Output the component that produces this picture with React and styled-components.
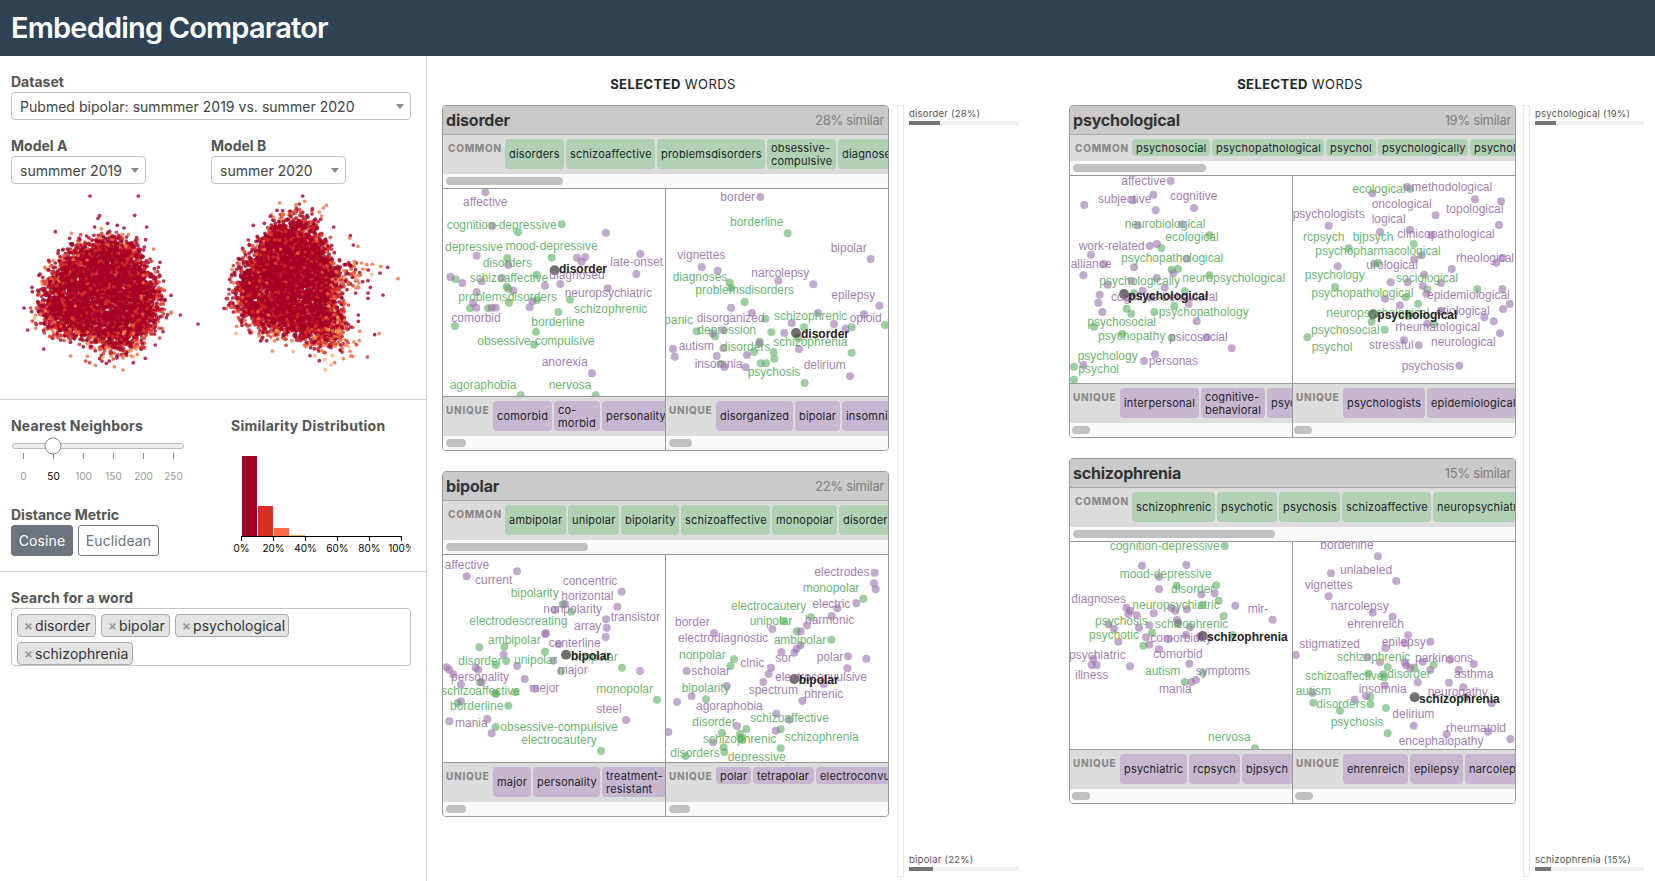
import React, { useMemo } from "react";
import styled, { createGlobalStyle } from "styled-components";

const GlobalStyle = createGlobalStyle`
  *, *::before, *::after { box-sizing: border-box; }
  body {
    margin: 0;
    background: #fff;
    color: #212529;
    font-family: Inter, "Liberation Sans", sans-serif;
    overflow: hidden;
  }
`;

const Page = styled.div`
  display: flex;
  flex-direction: column;
  width: 1655px;
  height: 881px;
  overflow: hidden;
`;

const Header = styled.header`
  flex: none;
  display: flex;
  align-items: center;
  height: 56px;
  padding: 0 11px 1px;
  background: #2f4355;
  color: #fff;
`;

const Title = styled.h1`
  margin: 0;
  font-size: 29px;
  font-weight: 600;
  letter-spacing: -0.82px;
  line-height: 36px;
  white-space: nowrap;
`;

const Body = styled.div`
  flex: 1;
  display: flex;
  min-height: 0;
`;

/* ---------- sidebar ---------- */

const Sidebar = styled.aside`
  flex: none;
  width: 427px;
  border-right: 1px solid #ccc;
`;

const Section = styled.section`
  height: ${(p) => p.$height}px;
  padding: ${(p) => p.$top}px 15px 0 11px;
  border-bottom: ${(p) => (p.$last ? "none" : "1px solid #d0d0d0")};
  overflow: hidden;
`;

const Columns = styled.div`
  display: flex;
`;

const Column = styled.div`
  flex: none;
  width: ${(p) => p.$width}px;
`;

const FieldLabel = styled.div`
  height: 20px;
  font-size: 14px;
  font-weight: 700;
  line-height: 20px;
  letter-spacing: ${(p) => p.$spacing || 0}px;
  color: #555;
  white-space: nowrap;
`;

const ModelLabel = styled(FieldLabel)`
  margin-top: 16px;
`;

const MetricLabel = styled(FieldLabel)`
  margin-top: 15px;
`;

const Select = styled.div`
  display: flex;
  align-items: center;
  justify-content: space-between;
  width: ${(p) => p.$width}px;
  height: 28px;
  padding: 0 6px 0 8px;
  border: 1px solid #c4c4c4;
  border-radius: 4px;
  font-size: 14px;
  letter-spacing: 0.03px;
  color: #444;
  white-space: nowrap;
`;

const Caret = styled.span`
  border: 4px solid transparent;
  border-top: 5px solid #888;
  border-bottom: 0;
`;

const CloudArea = styled.svg`
  display: block;
  width: 415px;
  height: 200px;
  margin: 5px 0 0 -11px;
`;

const SliderArea = styled.svg`
  display: block;
  width: 190px;
  height: 54px;
  margin-left: -11px;
`;

const Histogram = styled.svg`
  display: block;
  width: 180px;
  height: 120px;
`;

const ButtonRow = styled.div`
  display: flex;
  gap: 5px;
`;

const MetricButton = styled.button`
  width: ${(p) => p.$width}px;
  height: 31px;
  padding: 0;
  border: 1px solid #6c757d;
  border-radius: 3px;
  background: ${(p) => (p.$active ? "#6c757d" : "#fff")};
  color: ${(p) => (p.$active ? "#fff" : "#6c757d")};
  font: 14px Inter, sans-serif;
  letter-spacing: 0.1px;
  text-align: center;
`;

const TagBox = styled.div`
  display: flex;
  flex-wrap: wrap;
  align-content: flex-start;
  gap: 5px;
  width: 400px;
  height: 58px;
  padding: 5px 100px 0 5px;
  border: 1px solid #c4c4c4;
  border-radius: 4px;
`;

const Tag = styled.span`
  display: flex;
  align-items: center;
  gap: 2px;
  width: ${(p) => p.$width}px;
  height: 23px;
  padding-left: 6px;
  border: 1px solid #aaa;
  border-radius: 4px;
  background: #e4e4e4;
  color: #333;
  font-size: 14px;
  letter-spacing: 0.06px;
  white-space: nowrap;
`;

const TagRemove = styled.b`
  width: 9px;
  color: #999;
  font-size: 13px;
  text-align: center;
`;

/* ---------- main area ---------- */

const Main = styled.main`
  flex: 1;
  display: flex;
  min-width: 0;
  padding-left: 15px;
`;

const Panel = styled.section`
  flex: none;
  width: 627px;
  height: 825px;
`;

const PanelTitle = styled.h2`
  width: 462px;
  height: 49px;
  margin: 0;
  padding-top: 18px;
  font-size: 13px;
  font-weight: 400;
  line-height: 21px;
  letter-spacing: 0.42px;
  text-align: center;
  color: #212529;
`;

const PanelBody = styled.div`
  display: flex;
  height: 772px;
`;

const CardList = styled.div`
  flex: none;
  display: flex;
  flex-direction: column;
  gap: 20px;
  width: 447px;
`;

const Rail = styled.div`
  flex: none;
  width: 7px;
  margin-left: ${(p) => p.$gap}px;
  border: 1px solid #e9e9e9;
`;

const Overview = styled.div`
  flex: 1;
  display: flex;
  flex-direction: column;
  justify-content: space-between;
  padding: 1px 0 6px ${(p) => p.$gap}px;
`;

const OverviewItem = styled.div`
  width: 109px;
`;

const OverviewLabel = styled.div`
  height: 15px;
  font-size: 9.5px;
  line-height: 15px;
  letter-spacing: 0.24px;
  color: #555;
  white-space: nowrap;
`;

const OverviewTrack = styled.div`
  height: 4px;
  background: #f0f0f0;
`;

const OverviewFill = styled.div`
  height: 4px;
  background: #757575;
`;

const Card = styled.article`
  flex: none;
  border: 1px solid #999;
  border-radius: 4px;
  overflow: hidden;
`;

const CardHeader = styled.div`
  display: flex;
  align-items: center;
  justify-content: space-between;
  height: 29px;
  padding: 0 4px 0 3px;
  border-bottom: 1px solid #aaa;
  background: #cacaca;
`;

const CardWord = styled.h3`
  margin: 0;
  font-size: 16px;
  font-weight: 700;
  letter-spacing: -0.2px;
  color: #333;
`;

const CardScore = styled.span`
  font-size: 13px;
  letter-spacing: -0.3px;
  color: #808080;
`;

const WordStrip = styled.div`
  display: flex;
  align-items: flex-start;
  height: ${(p) => (p.$single ? 26 : 39)}px;
  padding-top: 4px;
  background: #dcdcdc;
  overflow: hidden;
`;

const StripLabel = styled.div`
  flex: none;
  width: ${(p) => p.$width}px;
  padding-left: ${(p) => p.$inset}px;
  font-size: 10px;
  font-weight: 800;
  line-height: 19px;
  letter-spacing: 0.75px;
  color: #8a8a8a;
`;

const ChipRow = styled.div`
  display: flex;
  gap: 2px;
`;

const Chip = styled.div`
  flex: none;
  display: flex;
  align-items: center;
  width: ${(p) => p.$width}px;
  height: ${(p) => (p.$single ? 17 : 30)}px;
  padding: 1px 0 0 4px;
  border-radius: 4px;
  background: ${(p) => (p.$tone === "common" ? "#b0d1b4" : "#c6b6cf")};
  color: #212529;
  font-size: 11px;
  line-height: 13px;
  letter-spacing: 0.2px;
  white-space: pre;
`;

const ScrollTrack = styled.div`
  height: 14px;
  padding: 3px 0 0 ${(p) => p.$inset}px;
  background: #fafafa;
`;

const ScrollThumb = styled.div`
  width: ${(p) => p.$width}px;
  height: 8px;
  border-radius: 4px;
  background: #c1c1c1;
`;

const Halves = styled.div`
  display: flex;
`;

const Half = styled.div`
  flex: none;
  width: ${(p) => (p.$first ? 223 : 222)}px;
  border-right: ${(p) => (p.$first ? "1px solid #999" : "none")};
`;

const Plot = styled.svg`
  display: block;
  width: 222px;
  height: 209px;
  border-top: 1px solid #999;
  border-bottom: 1px solid #999;
  font-family: "Liberation Sans", sans-serif;
  font-size: 36px;
`;

/* ---------- data ---------- */

const P = "#9970ab";
const G = "#5aae61";

const cards = {
  disorder: {
    word: "disorder", score: 28, thumb: 117, inset: 3,
    common: [["disorders", 59], ["schizoaffective", 89], ["problemsdisorders", 108], ["obsessive-\ncompulsive", 69], ["diagnoses", 70]],
    halves: [
      {
        thumb: 20, inset: 3,
        unique: [["comorbid", 59], ["co-\nmorbid", 46], ["personality", 67]],
        origin: [24, 357],
        focus: [359, 601, 373, 597],
        p: [[151,367],[172,468],[513,488],[125,557],[220,585],[426,563],[451,561],[440,575],[616,552],[604,612],[46,621],[82,639],[140,634],[200,624],[330,647],[376,642],[518,655],[235,662],[125,666],[114,698],[124,713],[170,713],[182,713],[284,712],[292,694],[471,910]],
        g: [[380,463],[249,487],[217,564],[350,563],[305,614],[62,628],[215,650],[220,656],[222,698],[105,715],[159,715],[306,690],[405,689],[370,726],[60,768],[303,785],[297,824],[257,976],[482,976]],
        labels: [[P,"affective",85,396],[G,"cognition-depressive",36,465],[G,"depressive",31,530],[G,"mood-depressive",213,528],[G,"disorders",144,578],[P,"late-onset",527,576],[G,"schizoaffective",105,624],[P,"diagnosed",344,615],[P,"neuropsychiatric",390,668],[G,"problemsdisorders",71,681],[G,"schizophrenic",418,717],[P,"comorbid",50,744],[G,"borderline",290,756],[G,"obsessive-compulsive",128,813],[P,"anorexia",321,876],[G,"agoraphobia",45,945],[G,"nervosa",342,945]],
      },
      {
        thumb: 23, inset: 3,
        unique: [["disorganized", 77], ["bipolar", 45], ["insomnia", 60]],
        origin: [18, 357],
        focus: [408, 789, 424, 792],
        p: [[301,381],[632,567],[125,591],[173,602],[355,632],[460,643],[658,707],[213,713],[275,729],[474,729],[612,733],[395,759],[522,762],[557,776],[373,789],[190,781],[158,790],[39,837],[44,860],[190,834],[298,820],[417,837],[170,858],[261,855],[193,891],[257,892],[570,919]],
        g: [[383,490],[209,638],[214,654],[254,696],[316,746],[675,765],[432,772],[575,772],[110,784],[165,799],[334,787],[299,815],[282,846],[341,846],[343,866],[183,882],[302,880],[318,880],[575,848],[414,805],[434,939]],
        labels: [[P,"border",182,381],[G,"borderline",211,456],[P,"bipolar",513,534],[P,"vignettes",53,555],[P,"narcolepsy",275,609],[G,"diagnoses",39,621],[G,"problemsdisorders",107,660],[P,"epilepsy",515,675],[G,"panic",14,750],[P,"disorganized",111,744],[G,"schizophrenic",343,738],[P,"opioid",570,744],[G,"depression",113,780],[G,"schizophrenia",341,816],[P,"autism",57,828],[G,"disorders",184,831],[P,"insomnia",105,882],[P,"delirium",432,885],[G,"psychosis",264,906]],
      },
    ],
  },
  bipolar: {
    word: "bipolar", score: 22, thumb: 142, inset: 3,
    common: [["ambipolar", 61], ["unipolar", 51], ["bipolarity", 58], ["schizoaffective", 89], ["monopolar", 65], ["disorder", 60]],
    halves: [
      {
        thumb: 20, inset: 3,
        unique: [["major", 38], ["personality", 67], ["treatment-\nresistant", 66]],
        origin: [24, 270],
        focus: [393, 569, 409, 573],
        p: [[95,334],[246,319],[560,380],[547,425],[390,417],[360,435],[513,463],[515,488],[512,516],[330,507],[333,505],[371,538],[206,569],[246,603],[355,587],[35,607],[43,614],[55,628],[122,608],[130,614],[78,659],[140,652],[269,642],[300,671],[615,618],[78,709],[43,769],[157,762],[170,805],[573,765]],
        g: [[383,418],[409,440],[133,547],[208,546],[330,560],[182,600],[214,588],[378,619],[561,608],[181,685],[241,682],[183,686],[220,722],[68,714],[666,704],[182,786],[498,858],[135,651]],
        labels: [[P,"affective",30,300],[P,"current",121,345],[P,"concentric",384,348],[G,"bipolarity",228,384],[P,"horizontal",380,393],[P,"nonpolarity",326,432],[P,"transistor",528,456],[G,"electrodescreating",104,468],[P,"array",418,483],[G,"ambipolar",160,525],[P,"centerline",342,534],[G,"disorder",71,588],[G,"unipolar",238,585],[G,"nonpolar",409,577],[P,"major",369,615],[P,"personality",49,636],[P,"mejor",284,669],[G,"monopolar",485,672],[G,"schizoaffective",20,678],[G,"borderline",46,723],[P,"steel",485,732],[P,"mania",61,774],[G,"obsessive-compulsive",197,786],[G,"electrocautery",260,825]],
      },
      {
        thumb: 21, inset: 3, single: true,
        unique: [["polar", 35], ["tetrapolar", 61], ["electroconvulsive", 110]],
        origin: [18, 270],
        focus: [403, 642, 417, 645],
        p: [[644,323],[642,355],[647,373],[589,415],[532,430],[515,453],[441,481],[337,492],[422,499],[162,504],[421,541],[410,551],[403,563],[364,561],[564,574],[619,581],[333,608],[326,627],[562,610],[80,618],[310,651],[491,657],[200,663],[95,694],[51,711],[427,708],[349,746],[388,764],[231,783],[347,797],[25,801],[159,832]],
        g: [[610,401],[453,457],[370,468],[410,499],[514,524],[222,583],[211,603],[138,703],[259,792],[362,793],[186,804],[240,806],[242,818],[246,825],[191,847],[193,861],[362,850],[77,873]],
        labels: [[P,"electrodes",464,321],[G,"monopolar",429,369],[P,"electric",458,417],[G,"electrocautery",214,423],[G,"unipolar",270,468],[P,"harmonic",436,465],[P,"border",46,471],[P,"electrodiagnostic",55,519],[G,"ambipolar",342,525],[G,"nonpolar",58,570],[P,"clnic",242,594],[P,"sor",347,579],[P,"polar",471,576],[P,"scholar",95,618],[P,"electroconvulsive",346,636],[G,"bipolarity",66,669],[P,"spectrum",267,675],[P,"phrenic",433,687],[P,"agoraphobia",109,723],[G,"schizoaffective",272,759],[G,"disorder",98,771],[G,"schizophrenic",130,822],[G,"schizophrenia",375,816],[G,"disorders",32,864],[G,"depressive",204,876]],
      },
    ],
  },
  psychological: {
    word: "psychological", score: 19, thumb: 133, inset: 3, single: true,
    common: [["psychosocial", 78], ["psychopathological", 112], ["psychol", 50], ["psychologically", 90], ["psychology", 70]],
    halves: [
      {
        thumb: 18, inset: 2,
        unique: [["interpersonal", 79], ["cognitive-\nbehavioral", 64], ["psychiatric", 67]],
        origin: [30, 318],
        focus: [192, 672, 206, 678],
        p: [[332,333],[280,374],[218,391],[73,405],[402,414],[287,421],[233,466],[365,463],[291,522],[269,528],[93,554],[380,566],[132,582],[222,592],[70,616],[340,610],[290,624],[214,632],[143,644],[314,653],[248,662],[119,674],[115,698],[200,684],[274,682],[386,702],[127,726],[410,754],[440,802],[515,835],[285,853],[252,873],[70,885]],
        g: [[448,496],[304,534],[335,599],[354,597],[448,616],[374,664],[222,670],[343,708],[200,716],[214,731],[283,726],[102,770],[186,792],[335,804],[42,890],[42,929]],
        labels: [[P,"affective",185,333],[P,"subjective",115,387],[P,"cognitive",331,378],[G,"neurobiological",195,462],[G,"ecological",317,501],[P,"work-related",57,528],[G,"psychopathological",184,564],[P,"alliance",33,582],[G,"psychologically",119,633],[G,"neuropsychological",368,624],[P,"cognitive-behavioral",154,681],[G,"psychopathology",297,726],[G,"psychosocial",83,756],[G,"psychopathy",115,798],[P,"psicosocial",328,801],[G,"psychology",54,858],[P,"personas",267,873],[G,"psychol",56,897]],
      },
      {
        thumb: 18, inset: 1,
        unique: [["psychologists", 82], ["epidemiological", 92]],
        origin: [24, 318],
        focus: [264, 733, 278, 735],
        p: [[366,351],[262,370],[570,388],[648,394],[452,436],[131,467],[642,465],[375,480],[285,486],[439,495],[410,556],[388,568],[652,563],[634,578],[158,589],[500,597],[417,614],[317,637],[368,637],[468,639],[413,648],[652,657],[424,671],[300,686],[345,706],[674,702],[654,717],[468,722],[598,742],[626,754],[427,761],[645,790],[357,811],[401,826],[523,887]],
        g: [[376,356],[386,522],[191,535],[268,581],[280,579],[150,651],[577,658],[427,658],[362,682],[399,701],[372,734],[260,755],[446,762],[299,779],[67,802]],
        labels: [[G,"ecological",203,357],[P,"methodological",380,351],[P,"oncological",261,402],[P,"topological",484,417],[P,"psychologists",24,433],[P,"logical",261,447],[G,"rcpsych",55,501],[G,"bjpsych",204,501],[P,"clinicopathological",338,492],[G,"psychopharmacological",92,543],[P,"rheological",514,564],[P,"urological",245,585],[G,"psychology",60,615],[G,"sociological",334,624],[G,"psychopathological",80,669],[P,"epidemiological",427,675],[G,"neuropsychological",125,729],[P,"etiological",455,723],[P,"rheumatological",332,771],[G,"psychosocial",79,780],[G,"psychol",81,831],[P,"stressful",253,825],[P,"neurological",439,816],[P,"psychosis",351,888]],
      },
    ],
  },
  schizophrenia: {
    word: "schizophrenia", score: 15, thumb: 202, inset: 3,
    common: [["schizophrenic", 83], ["psychotic", 60], ["psychosis", 61], ["schizoaffective", 89], ["neuropsychiatric", 100]],
    halves: [
      {
        thumb: 18, inset: 2,
        unique: [["psychiatric", 67], ["rcpsych", 51], ["bjpsych", 51]],
        origin: [30, 276],
        focus: [428, 558, 442, 561],
        p: [[246,347],[379,345],[297,380],[297,417],[464,430],[424,433],[526,467],[199,473],[210,482],[205,492],[230,496],[281,490],[334,474],[346,482],[381,478],[638,509],[351,510],[355,519],[145,523],[268,526],[162,536],[237,533],[390,531],[378,555],[258,562],[325,568],[175,575],[268,584],[419,560],[297,598],[100,626],[95,645],[110,645],[210,649],[388,641],[408,690],[394,696]],
        g: [[494,288],[350,407],[468,406],[476,452],[427,465],[491,498],[354,520],[276,548],[518,555],[250,587],[428,668],[374,696],[585,895]],
        labels: [[G,"cognition-depressive",150,288],[G,"mood-depressive",180,372],[G,"disorder",334,417],[P,"diagnoses",35,447],[G,"neuropsychiatric",218,465],[P,"mir-",564,477],[G,"psychosis",106,513],[G,"schizophrenic",286,521],[G,"psychotic",88,555],[P,"comorbidity",272,564],[P,"comorbid",281,612],[P,"psychiatric",28,615],[P,"illness",46,675],[G,"autism",256,663],[P,"symptoms",408,663],[P,"mania",298,717],[G,"nervosa",445,861]],
      },
      {
        thumb: 18, inset: 2,
        unique: [["ehrenreich", 65], ["epilepsy", 53], ["narcolepsy", 68]],
        origin: [24, 276],
        focus: [389, 742, 403, 747],
        p: [[279,319],[138,370],[334,393],[131,439],[263,488],[323,500],[369,556],[436,575],[359,580],[301,594],[32,615],[246,622],[285,637],[359,637],[364,646],[376,654],[413,635],[495,629],[566,642],[436,660],[521,660],[398,697],[492,698],[299,706],[535,712],[243,738],[82,729],[209,749],[542,742],[620,760],[386,827],[485,852],[609,845],[676,867]],
        g: [[446,644],[308,651],[388,653],[250,671],[295,673],[297,682],[85,758],[256,741],[256,763],[303,774],[165,782],[308,850]],
        labels: [[P,"borderline",107,285],[P,"unlabeled",166,360],[P,"vignettes",60,405],[P,"narcolepsy",138,468],[P,"ehrenreich",188,522],[P,"stigmatized",44,582],[P,"epilepsy",291,576],[G,"schizophrenic",157,621],[P,"parkinsons",391,624],[G,"schizoaffective",61,678],[G,"disorder",308,672],[P,"asthma",508,672],[G,"autism",33,723],[P,"insomnia",222,717],[P,"neuropathy",429,726],[G,"disorders",95,762],[P,"delirium",323,792],[G,"psychosis",138,816],[P,"rheumatoid",484,834],[P,"encephalopathy",342,873]],
      },
    ],
  },
};

const panels = [
  { cards: [cards.disorder, cards.bipolar], railGap: 8, overviewGap: 5 },
  { cards: [cards.psychological, cards.schizophrenia], railGap: 7, overviewGap: 5 },
];

/* ---------- embedding clouds ---------- */

const clouds = [
  {
    seed: 7, center: [302, 880], count: 4900,
    fringe: [[330, 1065, 42, 14, 26]],
    outline: [[108,925],[126,840],[178,762],[232,720],[300,700],[362,700],[415,726],[456,786],[482,860],[496,930],[482,985],[440,1030],[380,1060],[310,1055],[225,1030],[150,1010],[112,965]],
    loose: [[270,591],[415,591],[299,650],[294,658],[404,649],[323,673],[352,679],[440,684],[166,698],[372,687],[304,689,2],[214,703,2],[96,865],[72,927],[95,938],[104,958,3],[107,988,2],[83,993],[131,1050],[212,1071,2],[513,889],[541,948],[594,975],[489,998],[466,1038],[436,1078],[400,1091],[369,1113,2],[343,1103,2],[286,1099,2],[309,1076,3],[319,1093],[351,1077],[480,790],[461,750,2],[117,829],[151,802,2],[137,808,2],[514,942,2],[392,1055,3],[412,1066,2]],
  },
  {
    seed: 21, center: [875, 850], count: 4900,
    fringe: [[1052, 825, 24, 26, 60], [1010, 1030, 34, 20, 60], [1015, 950, 16, 45, 60]],
    outline: [[684,905],[702,825],[735,765],[780,705],[828,655],[895,632],[948,658],[980,715],[1000,770],[1030,810],[1030,850],[1028,900],[1036,960],[1030,1020],[985,1050],[940,1050],[885,1022],[815,1026],[755,995],[704,948]],
    loose: [[908,591],[839,612,2],[914,607,2],[888,617,2],[979,619,2],[970,627,2],[937,629],[831,634],[848,635],[958,639,2],[811,652],[760,679],[728,748],[745,723],[696,812,2],[672,928],[708,1003,3],[710,982,2],[1001,684],[1051,710],[1049,717,2],[1060,738],[1074,742,2],[1117,796,2],[1142,802,2],[1163,805],[1140,822],[1194,839,2],[1104,845],[1111,865],[1104,882],[1104,898],[1149,888],[1075,948],[1075,967],[1124,1007],[1138,1003,2],[1076,866,2],[1078,1025,2],[1045,1043,3],[1030,1079,2],[976,1112,3],[994,1098,3],[1004,1091,2],[974,1082,3],[997,1069,3],[880,1057,3],[817,1056,2],[930,1070],[1085,792,2],[1105,813]],
  },
];

const ramp = ["#a50026", "#d73027", "#f46d43", "#fdae61"];

function makeRandom(seed) {
  let s = seed * 7919;
  return () => {
    s = (s * 1664525 + 1013904223) % 4294967296;
    return s / 4294967296;
  };
}

function buildCloud({ seed, center, count, outline, loose, fringe }) {
  const rnd = makeRandom(seed);
  const [cx, cy] = center;
  const reach = (angle) => {
    const dx = Math.cos(angle);
    const dy = Math.sin(angle);
    for (let i = 0; i < outline.length; i++) {
      const [ax, ay] = outline[i];
      const [bx, by] = outline[(i + 1) % outline.length];
      const ex = bx - ax;
      const ey = by - ay;
      const det = dx * ey - dy * ex;
      if (Math.abs(det) < 1e-9) continue;
      const t = ((ax - cx) * ey - (ay - cy) * ex) / det;
      const u = ((ax - cx) * dy - (ay - cy) * dx) / det;
      if (t > 0 && u >= 0 && u <= 1) return t;
    }
    return 200;
  };
  const dots = [];
  while (dots.length < count) {
    const x = cx + (rnd() - 0.5) * 520;
    const y = cy + (rnd() - 0.5) * 560;
    const d = Math.hypot(x - cx, y - cy) / reach(Math.atan2(y - cy, x - cx));
    if (d > 1.12) continue;
    if (d > 0.72 && rnd() > Math.pow((1.14 - d) / 0.42, 2)) continue;
    const low = Math.max(0, (y - 970) / 200);
    const warm = 0.1 + 0.36 * Math.pow(d, 3) + low * 0.35;
    let tone = 0;
    if (rnd() < warm) {
      const k = rnd();
      tone = k < 0.74 - low * 0.3 ? 1 : k < 0.99 - low * 0.08 ? 2 : 3;
      if (d < 0.7 && tone > 1 && rnd() < 0.6) tone = 1;
    }
    dots.push([x, y, tone]);
  }
  fringe.forEach(([fx, fy, sx, sy, n]) => {
    for (let i = 0; i < n; i++) {
      const gx = rnd() + rnd() + rnd() - 1.5;
      const gy = rnd() + rnd() + rnd() - 1.5;
      const k = rnd();
      dots.push([fx + gx * sx * 2, fy + gy * sy * 2, k < 0.35 ? 0 : k < 0.6 ? 1 : k < 0.93 ? 2 : 3]);
    }
  });
  return dots.concat(loose.map(([x, y, t = 0]) => [x, y, t]));
}

function Clouds() {
  const dots = useMemo(() => clouds.flatMap(buildCloud), []);
  return (
    <CloudArea viewBox="0 570 1245 600">
      {dots.map(([x, y, tone], i) => (
        <circle key={i} cx={x.toFixed(0)} cy={y.toFixed(0)} r="5.6" fill={ramp[tone]} fillOpacity="0.8" />
      ))}
    </CloudArea>
  );
}

/* ---------- pieces ---------- */

function NeighborsSlider() {
  return (
    <SliderArea viewBox="0 436 190 54" fontFamily="Inter, sans-serif" fontSize="10">
      <rect x="12.5" y="443.5" width="171" height="5" rx="2.5" fill="#eee" stroke="#bbb" />
      {[0, 50, 100, 150, 200, 250].map((v, i) => (
        <g key={v}>
          <rect x={23 + i * 30} y="453" width="1" height="6" fill="#888" />
          <text x={23.5 + i * 30} y="480" textAnchor="middle" fill={v === 50 ? "#000" : "#999"}>{v}</text>
        </g>
      ))}
      <circle cx="53" cy="446" r="8" fill="#fff" stroke="#888" />
    </SliderArea>
  );
}

function SimilarityHistogram() {
  const bars = [[80, "#a50026"], [30, "#d73027"], [8, "#f46d43"], [1, "#fdae61"]];
  return (
    <Histogram viewBox="231 436 180 120" fontFamily="Inter, sans-serif" fontSize="10">
      {bars.map(([h, fill], i) => (
        <rect key={fill} x={242 + i * 16} y={536 - h} width="15" height={h} fill={fill} />
      ))}
      <path d="M241.5 541V536.5H401.5V541" fill="none" stroke="#000" />
      {[0, 20, 40, 60, 80, 100].map((v, i) => (
        <g key={v}>
          <path d={`M${241.5 + i * 32} 536V541`} stroke="#000" />
          <text x={241.5 + i * 32} y="552" textAnchor="middle" fill="#000">{v}%</text>
        </g>
      ))}
    </Histogram>
  );
}

function Words({ label, labelWidth, inset, tone, words, single, tall }) {
  return (
    <WordStrip $single={single && !tall}>
      <StripLabel $width={labelWidth} $inset={inset}>{label}</StripLabel>
      <ChipRow>
        {words.map(([text, width]) => (
          <Chip key={text} $tone={tone} $width={width} $single={single}>{text}</Chip>
        ))}
      </ChipRow>
    </WordStrip>
  );
}

function NeighborPlot({ origin, focus, p, g, labels, word }) {
  return (
    <Plot viewBox={`${origin[0]} ${origin[1]} 666 621`}>
      {g.map(([x, y], i) => <circle key={`g${i}`} cx={x} cy={y} r="12" fill={G} fillOpacity="0.6" />)}
      {p.map(([x, y], i) => <circle key={`p${i}`} cx={x} cy={y} r="12" fill={P} fillOpacity="0.6" />)}
      <circle cx={focus[0]} cy={focus[1]} r="15" fill="#333" fillOpacity="0.7" />
      {labels.map(([fill, text, x, y]) => (
        <text key={text} x={x - 1} y={y + 12} fill={fill} fillOpacity="0.92">{text}</text>
      ))}
      <text x={focus[2] - 1} y={focus[3] + 12} fill="#222" fontWeight="700">{word}</text>
    </Plot>
  );
}

function WordCard({ card }) {
  return (
    <Card>
      <CardHeader>
        <CardWord>{card.word}</CardWord>
        <CardScore>{card.score}% similar</CardScore>
      </CardHeader>
      <Words label="COMMON" labelWidth={62} inset={5} tone="common" words={card.common} single={card.single} />
      <ScrollTrack $inset={card.inset}><ScrollThumb $width={card.thumb} /></ScrollTrack>
      <Halves>
        {card.halves.map((half, i) => (
          <Half key={i} $first={i === 0}>
            <NeighborPlot {...half} word={card.word} />
            <Words label="UNIQUE" labelWidth={50} inset={3} tone="unique" words={half.unique} single={half.single} tall />
            <ScrollTrack $inset={half.inset}><ScrollThumb $width={half.thumb} /></ScrollTrack>
          </Half>
        ))}
      </Halves>
    </Card>
  );
}

export default function App() {
  return (
    <>
      <GlobalStyle />
      <Page>
        <Header><Title>Embedding Comparator</Title></Header>
        <Body>
          <Sidebar>
            <Section $height={344} $top={16}>
              <FieldLabel>Dataset</FieldLabel>
              <Select $width={400}>Pubmed bipolar: summmer 2019 vs. summer 2020<Caret /></Select>
              <Columns>
                <Column $width={200}>
                  <ModelLabel>Model A</ModelLabel>
                  <Select $width={135}>summmer 2019<Caret /></Select>
                </Column>
                <Column $width={200}>
                  <ModelLabel>Model B</ModelLabel>
                  <Select $width={135}>summer 2020<Caret /></Select>
                </Column>
              </Columns>
              <Clouds />
            </Section>
            <Section $height={172} $top={16}>
              <Columns>
                <Column $width={220}>
                  <FieldLabel $spacing={0.2}>Nearest Neighbors</FieldLabel>
                  <NeighborsSlider />
                  <MetricLabel>Distance Metric</MetricLabel>
                  <ButtonRow>
                    <MetricButton $width={62} $active>Cosine</MetricButton>
                    <MetricButton $width={81}>Euclidean</MetricButton>
                  </ButtonRow>
                </Column>
                <Column $width={180}>
                  <FieldLabel $spacing={0.26}>Similarity Distribution</FieldLabel>
                  <SimilarityHistogram />
                </Column>
              </Columns>
            </Section>
            <Section $height={300} $top={16} $last>
              <FieldLabel $spacing={0.12}>Search for a word</FieldLabel>
              <TagBox>
                {[["disorder", 79], ["bipolar", 69], ["psychological", 114], ["schizophrenia", 116]].map(([t, w]) => (
                  <Tag key={t} $width={w}><TagRemove>×</TagRemove>{t}</Tag>
                ))}
              </TagBox>
            </Section>
          </Sidebar>
          <Main>
            {panels.map((panel, i) => (
              <Panel key={i}>
                <PanelTitle><b>SELECTED</b> WORDS</PanelTitle>
                <PanelBody>
                  <CardList>
                    {panel.cards.map((c) => <WordCard key={c.word} card={c} />)}
                  </CardList>
                  <Rail $gap={panel.railGap} />
                  <Overview $gap={panel.overviewGap}>
                    {panel.cards.map((c) => (
                      <OverviewItem key={c.word}>
                        <OverviewLabel>{c.word} ({c.score}%)</OverviewLabel>
                        <OverviewTrack><OverviewFill style={{ width: `${c.score}%` }} /></OverviewTrack>
                      </OverviewItem>
                    ))}
                  </Overview>
                </PanelBody>
              </Panel>
            ))}
          </Main>
        </Body>
      </Page>
    </>
  );
}
